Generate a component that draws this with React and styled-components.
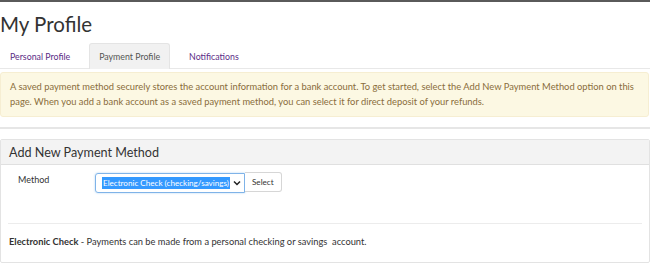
import React from "react";
import styled, { createGlobalStyle } from "styled-components";

const Global = createGlobalStyle`
  html, body { margin: 0; padding: 0; background: #fff; }
  body {
    font-family: Lato, "Open Sans", sans-serif;
    color: #333;
    border-top: 2px solid #5a5a5a;
    width: 650px;
    overflow: hidden;
  }
`;

const Page = styled.div`
  display: flex;
  flex-direction: column;
`;

const Title = styled.h1`
  margin: 10px 0 0 0;
  font-weight: 400;
  font-size: 20.5px;
  line-height: 24px;
  color: #333;
`;

const TabBar = styled.ul`
  list-style: none;
  margin: 7px 0 0 0;
  padding: 0;
  display: flex;
  gap: 9px;
  border-bottom: 1px solid #e8e8e8;
`;

const Tab = styled.li`
  height: 25px;
  padding: 0 9px;
  display: flex;
  align-items: center;
  font-size: 8.8px;
  color: ${(p) => (p.$active ? "#555" : "#5b2c86")};
  background: ${(p) => (p.$active ? "#f1f1f1" : "transparent")};
  border: 1px solid ${(p) => (p.$active ? "#e4e4e4" : "transparent")};
  border-bottom: none;
  border-radius: 3px 3px 0 0;
  margin-bottom: -1px;
`;

const Alert = styled.div`
  margin-top: 3px;
  margin-right: 1px;
  padding: 6px 9px 7px 9px;
  background: #fcf8e3;
  border: 1px solid #f6eed2;
  border-radius: 3px;
  color: #8a6d3b;
  font-size: 9.35px;
  line-height: 15px;
  white-space: nowrap;
`;

const Rule = styled.hr`
  margin: 10px 0 0 0;
  border: none;
  border-top: 2px solid #e6e6e6;
  height: 0;
`;

const Panel = styled.section`
  margin-top: 10px;
  border: 1px solid #e3e3e3;
  border-radius: 2px;
  height: 122px;
  display: flex;
  flex-direction: column;
`;

const PanelHeader = styled.div`
  background: #f3f3f3;
  border-bottom: 1px solid #e0e0e0;
  height: 24px;
  padding: 0 8px;
  display: flex;
  align-items: center;
  font-size: 12.6px;
  color: #333;
`;

const FormRow = styled.div`
  display: flex;
  align-items: flex-start;
  padding: 8px 0 0 17px;
`;

const Label = styled.label`
  width: 77px;
  font-size: 9px;
  line-height: 14px;
  color: #333;
`;

const SelectBox = styled.div`
  width: 142px;
  height: 18px;
  border: 1px solid #7fb3e8;
  border-radius: 3px 0 0 3px;
  box-shadow: 0 0 2px rgba(102, 175, 233, 0.6);
  display: flex;
  align-items: center;
  padding-left: 6px;
  box-sizing: content-box;
`;

const SelectText = styled.span`
  background: #3399ff;
  color: #fff;
  font-size: 8.1px;
  line-height: 12px;
  padding: 0 1px;
  white-space: nowrap;
`;

const Chevron = styled.svg`
  margin-left: 3px;
`;

const Button = styled.button`
  height: 20px;
  margin-top: -1px;
  padding: 0 7px;
  background: #fff;
  border: 1px solid #d6d6d6;
  border-left: none;
  border-radius: 0 3px 3px 0;
  font-family: inherit;
  font-size: 8.1px;
  color: #333;
`;

const InnerRule = styled.hr`
  margin: 30px 7px 0 7px;
  border: none;
  border-top: 1px solid #ececec;
  height: 0;
`;

const Note = styled.p`
  margin: 11px 0 0 8px;
  font-size: 9.3px;
  line-height: 14px;
  color: #333;
  white-space: pre;
`;

export default function App() {
  return (
    <Page>
      <Global />
      <Title>My Profile</Title>
      <TabBar>
        <Tab>Personal Profile</Tab>
        <Tab $active>Payment Profile</Tab>
        <Tab>Notifications</Tab>
      </TabBar>
      <Alert>
        A saved payment method securely stores the account information for a bank account. To get started, select the Add New Payment Method option on this
        <br />
        page. When you add a bank account as a saved payment method, you can select it for direct deposit of your refunds.
      </Alert>
      <Rule />
      <Panel>
        <PanelHeader>Add New Payment Method</PanelHeader>
        <FormRow>
          <Label>Method</Label>
          <SelectBox>
            <SelectText>Electronic Check (checking/savings)</SelectText>
            <Chevron width="8" height="6" viewBox="0 0 8 6">
              <path d="M1 1.5 L4 4.5 L7 1.5" fill="none" stroke="#222" strokeWidth="1.5" />
            </Chevron>
          </SelectBox>
          <Button>Select</Button>
        </FormRow>
        <InnerRule />
        <Note>
          <b>Electronic Check</b>{" - Payments can be made from a personal checking or savings  account."}
        </Note>
      </Panel>
    </Page>
  );
}
